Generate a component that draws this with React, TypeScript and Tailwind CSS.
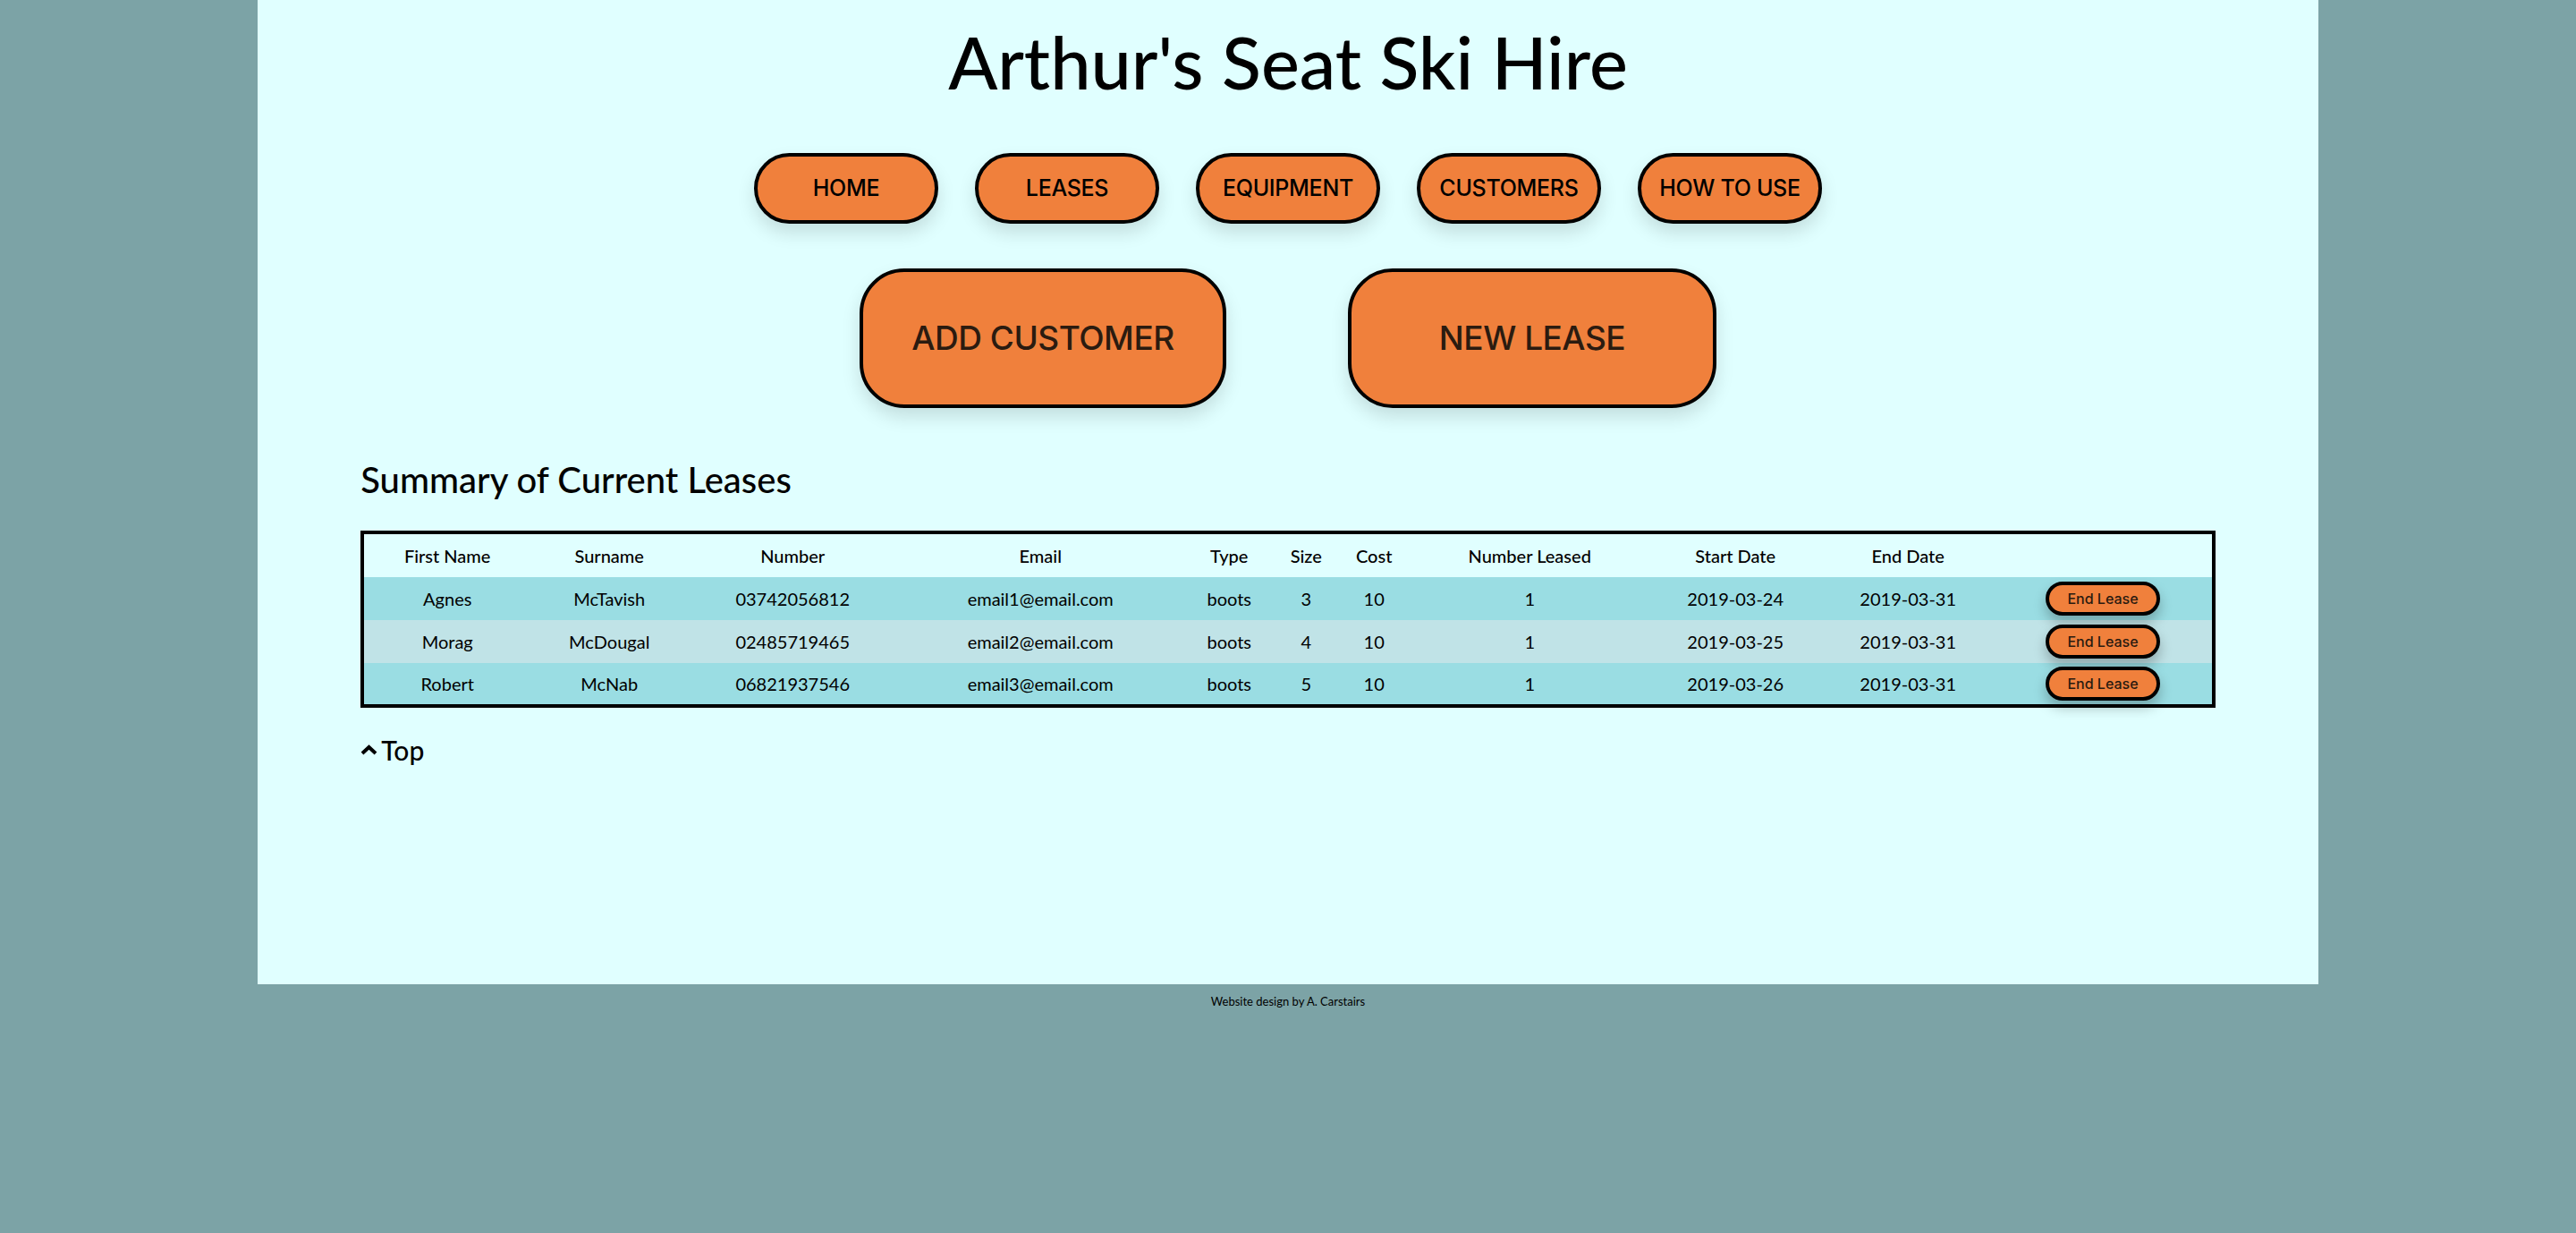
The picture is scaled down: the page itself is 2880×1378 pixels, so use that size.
const LEASES = [
  { first: 'Agnes', surname: 'McTavish', number: '03742056812', email: 'email1@email.com', type: 'boots', size: 3, cost: 10, leased: 1, start: '2019-03-24', end: '2019-03-31' },
  { first: 'Morag', surname: 'McDougal', number: '02485719465', email: 'email2@email.com', type: 'boots', size: 4, cost: 10, leased: 1, start: '2019-03-25', end: '2019-03-31' },
  { first: 'Robert', surname: 'McNab', number: '06821937546', email: 'email3@email.com', type: 'boots', size: 5, cost: 10, leased: 1, start: '2019-03-26', end: '2019-03-31' },
];

const NAV = ['HOME', 'LEASES', 'EQUIPMENT', 'CUSTOMERS', 'HOW TO USE'];

const HEADERS = ['First Name', 'Surname', 'Number', 'Email', 'Type', 'Size', 'Cost', 'Number Leased', 'Start Date', 'End Date', ''];

export default function App() {
  return (
    <div className="min-h-screen bg-[#7ca3a6] font-['Lato',sans-serif] text-black">
      <main className="mx-auto flex h-[1100px] w-[80%] flex-col items-center bg-[#e0ffff] pt-[28px]">
        <h1 className="text-[81px] font-medium leading-none">Arthur's Seat Ski Hire</h1>

        {/* top nav */}
        <nav className="mt-[62px] flex gap-[41px] font-['Inter',sans-serif]">
          {NAV.map((item) => (
            <a
              key={item}
              className="flex h-[79px] w-[206px] items-center justify-center rounded-full border-[4px] border-black bg-[#f0803c] text-[25px] font-medium tracking-[-0.3px] text-black shadow-[0_10px_20px_rgba(0,0,0,0.13)]"
            >
              {item}
            </a>
          ))}
        </nav>

        <div className="mt-[50px] flex gap-[136px] font-['Inter',sans-serif]">
          <button className="flex h-[156px] w-[410px] items-center justify-center rounded-[50px] border-[4px] border-black bg-[#f0803c] text-[37px] font-medium tracking-[-0.5px] text-[#2b1b10] shadow-[0_10px_20px_rgba(0,0,0,0.13)]">
            ADD CUSTOMER
          </button>
          <button className="flex h-[156px] w-[412px] items-center justify-center rounded-[50px] border-[4px] border-black bg-[#f0803c] text-[37px] font-medium tracking-[-0.5px] text-[#2b1b10] shadow-[0_10px_20px_rgba(0,0,0,0.13)]">
            NEW LEASE
          </button>
        </div>

        <section className="mt-[60px] w-[90%]">
          <h2 className="text-[40px] font-medium leading-none">Summary of Current Leases</h2>

          <table className="mt-[37px] w-full table-fixed border-collapse border-[4px] border-black text-[20px]">
            <colgroup>
              <col className="w-[188px]" />
              <col className="w-[176px]" />
              <col className="w-[234px]" />
              <col className="w-[320px]" />
              <col className="w-[102px]" />
              <col className="w-[70px]" />
              <col className="w-[82px]" />
              <col className="w-[266px]" />
              <col className="w-[194px]" />
              <col className="w-[192px]" />
              <col />
            </colgroup>
            <thead>
              <tr className="h-[50px]">
                {HEADERS.map((h, i) => (
                  <th key={i} className="text-center font-medium">
                    {h}
                  </th>
                ))}
              </tr>
            </thead>
            <tbody>
              {LEASES.map((l, i) => (
                <tr key={l.number} className={i % 2 === 0 ? 'h-[48px] bg-[#9adde3]' : 'h-[48px] bg-[#c0e3e7]'}>
                  <td className="text-center">{l.first}</td>
                  <td className="text-center">{l.surname}</td>
                  <td className="text-center">{l.number}</td>
                  <td className="text-center">{l.email}</td>
                  <td className="text-center">{l.type}</td>
                  <td className="text-center">{l.size}</td>
                  <td className="text-center">{l.cost}</td>
                  <td className="text-center">{l.leased}</td>
                  <td className="text-center">{l.start}</td>
                  <td className="text-center">{l.end}</td>
                  <td className="text-center">
                    <button className="h-[38px] w-[128px] rounded-full border-[4px] border-black bg-[#f0803c] font-['Inter',sans-serif] text-[16px] font-medium text-[#2b1b10] shadow-[0_8px_14px_rgba(0,0,0,0.25)]">
                      End Lease
                    </button>
                  </td>
                </tr>
              ))}
            </tbody>
          </table>

          <a className="mt-[32px] flex items-center text-[30px] font-medium leading-none">
            <svg width="19" height="12" viewBox="0 0 19 12" className="mr-[4px]" fill="none" stroke="black" strokeWidth="4">
              <path d="M2 10 L9.5 3 L17 10" />
            </svg>
            Top
          </a>
        </section>
      </main>
      <footer className="pt-[13px] text-center text-[13px] leading-none">Website design by A. Carstairs</footer>
    </div>
  );
}
